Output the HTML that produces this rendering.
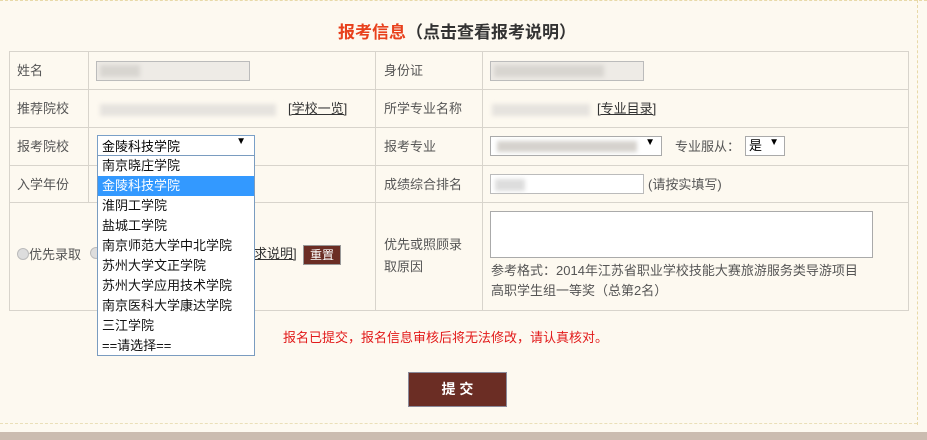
<!DOCTYPE html>
<html><head><meta charset="utf-8"><style>
body{margin:0;width:927px;height:440px;background:#fdf9f0;font-family:"Liberation Sans","Noto Sans CJK SC",sans-serif;font-size:13px;color:#555;position:relative;overflow:hidden}
.a{position:absolute;white-space:nowrap}
.hl{position:absolute;height:1px;background:#d8d4cc}
.vl{position:absolute;width:1px;background:#d8d4cc}
.blur{position:absolute;background:#e6e3de;filter:blur(2px)}
.inp{position:absolute;background:#fff;border:1px solid #bbb;box-sizing:border-box}
.sel{position:absolute;background:#fff;border:1px solid #aaa;box-sizing:border-box;font-size:13px;color:#000}
</style></head><body>
<div class="a" style="left:0;top:0;width:927px;border-top:1px dashed #e8d9a8"></div>
<div class="a" style="left:917px;top:0;height:425px;border-left:1px dashed #e8d9a8"></div>
<div class="a" style="left:0;top:423px;width:917px;border-top:1px dashed #eadfb8"></div>
<div class="a" style="left:0;top:432px;width:927px;height:8px;background:#cbbcb0"></div>
<div class="a" style="left:338px;top:18px;font-size:17px;font-weight:bold;color:#e8401c">报考信息<span style="color:#333">（点击查看报考说明）</span></div>
<div class="a" style="left:9px;top:51px;width:898px;height:258px;border:1px solid #d8d4cc"></div>
<div class="hl" style="left:9px;top:89px;width:899px"></div>
<div class="hl" style="left:9px;top:127px;width:899px"></div>
<div class="hl" style="left:9px;top:165px;width:899px"></div>
<div class="hl" style="left:9px;top:202px;width:899px"></div>
<div class="vl" style="left:88px;top:51px;height:152px"></div>
<div class="vl" style="left:375px;top:51px;height:259px"></div>
<div class="vl" style="left:482px;top:51px;height:259px"></div>
<div class="a" style="left:17px;top:60px">姓名</div>
<div class="a" style="left:17px;top:98px">推荐院校</div>
<div class="a" style="left:17px;top:136px">报考院校</div>
<div class="a" style="left:17px;top:174px">入学年份</div>
<div class="a" style="left:384px;top:60px">身份证</div>
<div class="a" style="left:384px;top:98px">所学专业名称</div>
<div class="a" style="left:384px;top:136px">报考专业</div>
<div class="a" style="left:384px;top:174px">成绩综合排名</div>
<div class="a" style="left:384px;top:234px;line-height:22px">优先或照顾录<br>取原因</div>
<div class="inp" style="left:96px;top:61px;width:154px;height:20px;background:#eeebe6"></div>
<div class="blur" style="left:100px;top:65px;width:40px;height:12px;background:#d8d5d0"></div>
<div class="blur" style="left:100px;top:104px;width:176px;height:12px"></div>
<div class="a" style="left:288px;top:98px;color:#333;text-decoration:underline">[学校一览]</div>
<div class="inp" style="left:490px;top:61px;width:154px;height:20px;background:#eeebe6"></div>
<div class="blur" style="left:494px;top:65px;width:110px;height:12px;background:#d8d5d0"></div>
<div class="blur" style="left:492px;top:104px;width:98px;height:12px"></div>
<div class="a" style="left:597px;top:98px;color:#333;text-decoration:underline">[专业目录]</div>
<div class="sel" style="left:490px;top:136px;width:172px;height:20px"><div class="blur" style="left:6px;top:4px;width:140px;height:11px;background:#d5d2cd"></div><span class="a" style="right:6px;top:0px;font-size:10px">▼</span></div>
<div class="a" style="left:675px;top:136px">专业服从：</div>
<div class="sel" style="left:745px;top:136px;width:40px;height:20px"><span class="a" style="left:3px;top:-2px">是</span><span class="a" style="right:5px;top:0px;font-size:10px">▼</span></div>
<div class="inp" style="left:490px;top:174px;width:154px;height:20px"><div class="blur" style="left:4px;top:4px;width:30px;height:12px;background:#ddd"></div></div>
<div class="a" style="left:648px;top:174px">(请按实填写)</div>
<div class="inp" style="left:490px;top:211px;width:383px;height:47px;border-color:#aaa"></div>
<div class="a" style="left:491px;top:261px;line-height:20px">参考格式：2014年江苏省职业学校技能大赛旅游服务类导游项目<br>高职学生组一等奖（总第2名）</div>
<div class="a" style="left:17px;top:244px"><span style="display:inline-block;width:10px;height:10px;border-radius:50%;background:#ddd;border:1px solid #bbb;vertical-align:-1px"></span>优先录取</div>
<div class="a" style="left:90px;top:247px;width:10px;height:10px;border-radius:50%;background:#ddd;border:1px solid #bbb"></div>
<div class="a" style="left:254px;top:243px;color:#333;text-decoration:underline">求说明]</div>
<div class="a" style="left:303px;top:245px;width:38px;height:20px;background:#6b2d24;border:1px solid #999;color:#fff;font-size:12px;text-align:center;line-height:18px;box-sizing:border-box">重置</div>
<div class="a" style="left:283px;top:327px;color:#e21a1a">报名已提交，报名信息审核后将无法修改，请认真核对。</div>
<div class="a" style="left:408px;top:372px;width:99px;height:35px;background:#6b2d24;border:1px solid #8a8a9a;box-sizing:border-box;color:#fff;font-weight:bold;font-size:14px;text-align:center;line-height:33px">提 交</div>
<div class="sel" style="left:97px;top:135px;width:158px;height:21px;border-color:#7aa0c8"><span class="a" style="left:4px;top:0px">金陵科技学院</span><span class="a" style="right:8px;top:0px;font-size:10px">▼</span></div>
<div class="a" style="left:97px;top:155px;width:158px;height:201px;background:#fff;border:1px solid #7a9cc0;box-sizing:border-box;font-size:13px;color:#111;line-height:20px">
<div style="padding-left:4px">南京晓庄学院</div>
<div style="padding-left:4px;background:#3399ff;color:#fff">金陵科技学院</div>
<div style="padding-left:4px">淮阴工学院</div>
<div style="padding-left:4px">盐城工学院</div>
<div style="padding-left:4px">南京师范大学中北学院</div>
<div style="padding-left:4px">苏州大学文正学院</div>
<div style="padding-left:4px">苏州大学应用技术学院</div>
<div style="padding-left:4px">南京医科大学康达学院</div>
<div style="padding-left:4px">三江学院</div>
<div style="padding-left:4px">==请选择==</div>
</div>
</body></html>
